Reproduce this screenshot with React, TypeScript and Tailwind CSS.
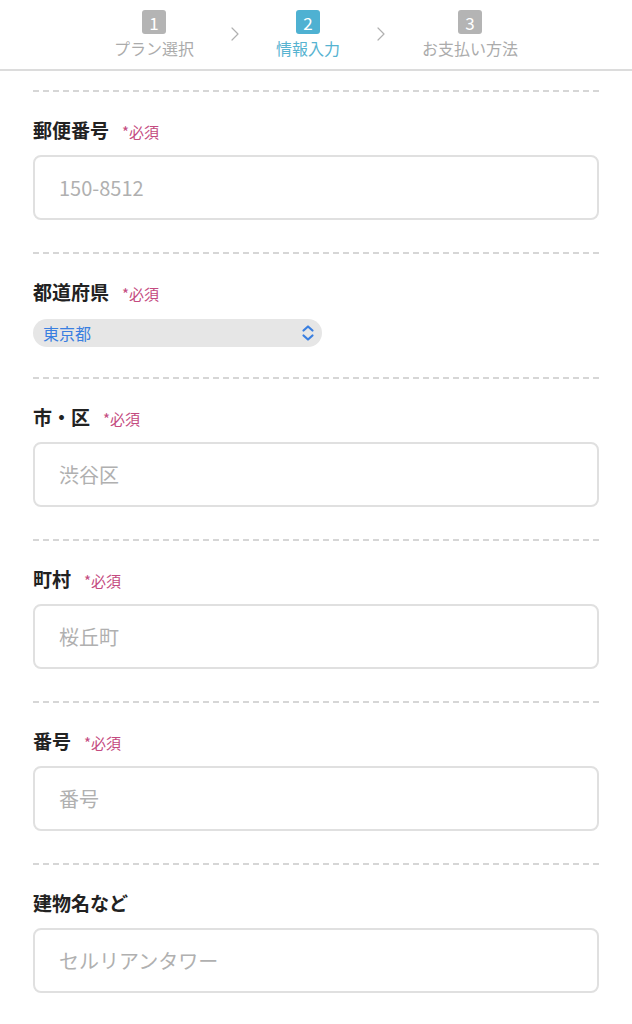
import { ChevronRight } from "lucide-react";

const steps = [
  { num: "1", label: "プラン選択", active: false },
  { num: "2", label: "情報入力", active: true },
  { num: "3", label: "お支払い方法", active: false },
];

const fields = [
  { label: "郵便番号", required: true, placeholder: "150-8512", type: "input" },
  { label: "都道府県", required: true, placeholder: "東京都", type: "select" },
  { label: "市・区", required: true, placeholder: "渋谷区", type: "input" },
  { label: "町村", required: true, placeholder: "桜丘町", type: "input" },
  { label: "番号", required: true, placeholder: "番号", type: "input" },
  { label: "建物名など", required: false, placeholder: "セルリアンタワー", type: "input" },
];

function Dashed() {
  return (
    <div className="h-[2px] w-full bg-[repeating-linear-gradient(90deg,#d6d6d6_0px,#d6d6d6_6px,transparent_6px,transparent_10px)]"></div>
  );
}

export default function App() {
  return (
    <div className="min-h-[1024px] w-full bg-white font-['Noto_Sans_CJK_JP','Noto_Sans',sans-serif]">
      {/* Steps header */}
      <div className="flex h-[71px] items-start justify-center gap-[29px] border-b-2 border-[#dcdcdc] pt-[10px]">
        {steps.map((step, index) => (
          <div key={index} className="flex items-start gap-[29px]">
            <div className="flex flex-col items-center">
              <div
                className={
                  step.active
                    ? "flex size-[24px] items-center justify-center rounded-[3px] bg-[#4eb1d2] text-[17px] leading-none text-white"
                    : "flex size-[24px] items-center justify-center rounded-[3px] bg-[#b4b4b4] text-[17px] leading-none text-white"
                }
              >
                {step.num}
              </div>
              <div
                className={
                  step.active
                    ? "mt-[2px] text-[16px] leading-[24px] text-[#56b3d1]"
                    : "mt-[2px] text-[16px] leading-[24px] text-[#ababab]"
                }
              >
                {step.label}
              </div>
            </div>
            {index < steps.length - 1 && (
              <ChevronRight className="mt-[12px] size-[24px] text-[#b0b0b0]" strokeWidth={1.2} />
            )}
          </div>
        ))}
      </div>

      {/* Form */}
      <div className="px-[33px] pt-[19px]">
        {fields.map((field, index) => (
          <div key={index}>
            <Dashed />
            <div className={field.type === "select" ? "pb-[30px] pt-[25px]" : "pb-[32px] pt-[25px]"}>
              <div className="flex h-[26px] items-baseline">
                <span className="text-[19px] font-bold leading-[26px] text-[#222]">{field.label}</span>
                {field.required && (
                  <span className="ml-[13px] text-[15px] leading-[26px] text-[#c44b80]">*必須</span>
                )}
              </div>
              {field.type === "select" ? (
                <div className="mt-[14px] flex h-[28px] w-[289px] items-center justify-between rounded-full bg-[#e6e6e6] pl-[10px] pr-[6px]">
                  <span className="text-[16px] leading-none text-[#3a7fe0]">{field.placeholder}</span>
                  <svg width="16" height="18" viewBox="0 0 16 18" fill="none">
                    <path d="M3.5 6.5 L8 2.5 L12.5 6.5" stroke="#3a7fe0" strokeWidth="2.2" strokeLinecap="round" strokeLinejoin="round" />
                    <path d="M3.5 11.5 L8 15.5 L12.5 11.5" stroke="#3a7fe0" strokeWidth="2.2" strokeLinecap="round" strokeLinejoin="round" />
                  </svg>
                </div>
              ) : (
                <div className="mt-[12px] flex h-[65px] items-center rounded-[8px] border-2 border-[#e0e0e0] pl-[24px]">
                  <span className="text-[20px] text-[#b0b0b0]">{field.placeholder}</span>
                </div>
              )}
            </div>
          </div>
        ))}
      </div>
    </div>
  );
}
